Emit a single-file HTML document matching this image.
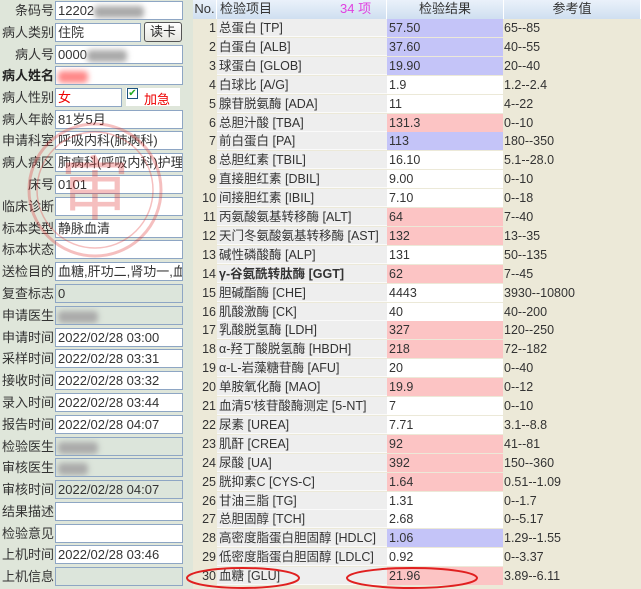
<!DOCTYPE html>
<html><head><meta charset="utf-8"><style>
*{margin:0;padding:0;box-sizing:border-box}
body{width:641px;height:589px;overflow:hidden;background:#dfe6da;font-family:"Liberation Sans","Noto Sans CJK SC",sans-serif;position:relative;font-size:13px;color:#222}
.l{position:absolute;left:0;width:54px;height:19px;line-height:19px;text-align:right;font-size:13px;color:#333;white-space:nowrap}
.i{position:absolute;left:55px;width:128px;height:19px;border:1px solid #8ea6c4;background:#fff;font-size:13px;line-height:17px;padding-left:2px;white-space:nowrap;overflow:hidden;color:#333}
.g{background:#dce5db}
.blur{display:inline-block;height:12px;background:#aaa;filter:blur(3px);vertical-align:middle;border-radius:4px}
#tbl{position:absolute;left:193px;top:0;width:448px;height:589px;background:#ece9d8}
.hd{position:absolute;top:0;height:19px;background:linear-gradient(#eaf1fa,#cfdff0);border-right:1px solid #fff;font-size:13px;line-height:18px;color:#333}
.r{position:absolute;left:0;width:448px;height:19px;font-size:12.5px;line-height:18px;white-space:nowrap}
.r span{position:absolute;top:0;height:18px}
.n{left:0;width:23px;text-align:right;color:#333}
.t{left:24px;width:170px;background:#eeeeee;padding-left:2px;color:#333;border-bottom:1px solid #fafafa}
.v{left:194px;width:116px;background:#fff;padding-left:2px;color:#333}
.f{left:311px;padding-left:0;color:#333}
.lo{background:#c4c4f8!important}.hi{background:#fcc4c4!important}
</style></head><body>

<div class="l" style="top:1px">条码号</div><div class="i" style="top:1px">12202<span class="blur" style="width:50px"></span></div>
<div class="l" style="top:23px">病人类别</div><div class="i" style="top:23px;width:86px">住院</div>
<div style="position:absolute;left:144px;top:22px;width:38px;height:20px;border:1px solid #555;border-radius:3px;background:linear-gradient(#fff,#e6e6e0);font-size:13px;text-align:center;line-height:18px">读卡</div>
<div class="l" style="top:45px">病人号</div><div class="i" style="top:45px">0000<span class="blur" style="width:40px"></span></div>
<div class="l" style="top:66px;font-weight:bold;color:#222">病人姓名</div><div class="i" style="top:66px"><span class="blur" style="width:30px;background:#f88"></span></div>
<div class="l" style="top:88px">病人性别</div><div class="i" style="top:88px;width:67px;color:#e00">女</div>
<div style="position:absolute;left:126px;top:88px;width:54px;height:18px;background:#fff"></div>
<div style="position:absolute;left:127px;top:88px;width:11px;height:11px;border:1px solid #1c5180;background:#fff;color:#2a2;font-size:10px;line-height:9px;text-align:center">✔</div>
<div style="position:absolute;left:144px;top:89px;color:#e00;font-size:13px">加急</div>
<div class="l" style="top:110px">病人年龄</div><div class="i" style="top:110px">81岁5月</div>
<div class="l" style="top:131px">申请科室</div><div class="i" style="top:131px">呼吸内科(肺病科)</div>
<div class="l" style="top:153px">病人病区</div><div class="i" style="top:153px">肺病科(呼吸内科)护理站</div>
<div class="l" style="top:175px">床号</div><div class="i" style="top:175px">0101</div>
<div class="l" style="top:197px">临床诊断</div><div class="i" style="top:197px"></div>
<div class="l" style="top:219px">标本类型</div><div class="i" style="top:219px">静脉血清</div>
<div class="l" style="top:240px">标本状态</div><div class="i" style="top:240px"></div>
<div class="l" style="top:262px">送检目的</div><div class="i" style="top:262px">血糖,肝功二,肾功一,血脂</div>
<div class="l" style="top:284px">复查标志</div><div class="i g" style="top:284px">0</div>
<div class="l" style="top:306px">申请医生</div><div class="i g" style="top:306px"><span class="blur" style="width:40px"></span></div>
<div class="l" style="top:328px">申请时间</div><div class="i" style="top:328px">2022/02/28 03:00</div>
<div class="l" style="top:349px">采样时间</div><div class="i" style="top:349px">2022/02/28 03:31</div>
<div class="l" style="top:371px">接收时间</div><div class="i" style="top:371px">2022/02/28 03:32</div>
<div class="l" style="top:393px">录入时间</div><div class="i" style="top:393px">2022/02/28 03:44</div>
<div class="l" style="top:415px">报告时间</div><div class="i" style="top:415px">2022/02/28 04:07</div>
<div class="l" style="top:437px">检验医生</div><div class="i g" style="top:437px"><span class="blur" style="width:40px"></span></div>
<div class="l" style="top:458px">审核医生</div><div class="i g" style="top:458px"><span class="blur" style="width:30px"></span></div>
<div class="l" style="top:480px">审核时间</div><div class="i g" style="top:480px">2022/02/28 04:07</div>
<div class="l" style="top:502px">结果描述</div><div class="i" style="top:502px"></div>
<div class="l" style="top:524px">检验意见</div><div class="i" style="top:524px"></div>
<div class="l" style="top:545px">上机时间</div><div class="i" style="top:545px">2022/02/28 03:46</div>
<div class="l" style="top:567px">上机信息</div><div class="i g" style="top:567px"></div>

<svg style="position:absolute;left:0;top:0;pointer-events:none" width="190" height="300"><g opacity="0.3" fill="none" stroke="#e03030"><circle cx="95" cy="190" r="66" stroke-width="3"/><circle cx="95" cy="190" r="58" stroke-width="1.5"/></g><text x="95" y="214" text-anchor="middle" font-size="70" fill="#e03030" opacity="0.3" font-family="Noto Sans CJK SC">审</text></svg>

<div id="tbl">
<div class="hd" style="left:0;width:24px;text-align:center">No.</div>
<div class="hd" style="left:24px;width:170px;padding-left:3px">检验项目<span style="position:absolute;left:123px;color:#e040e0">34 项</span></div>
<div class="hd" style="left:194px;width:117px;text-align:center">检验结果</div>
<div class="hd" style="left:311px;width:137px;text-align:center">参考值</div>
</div>
<div style="position:absolute;left:193px;top:19px;width:448px">
<div class="r" style="top:0"><span class="n">1</span><span class="t">总蛋白 [TP]</span><span class="v lo">57.50</span><span class="f">65--85</span></div>
<div class="r" style="top:18.9px"><span class="n">2</span><span class="t">白蛋白 [ALB]</span><span class="v lo">37.60</span><span class="f">40--55</span></div>
<div class="r" style="top:37.8px"><span class="n">3</span><span class="t">球蛋白 [GLOB]</span><span class="v lo">19.90</span><span class="f">20--40</span></div>
<div class="r" style="top:56.7px"><span class="n">4</span><span class="t">白球比 [A/G]</span><span class="v">1.9</span><span class="f">1.2--2.4</span></div>
<div class="r" style="top:75.6px"><span class="n">5</span><span class="t">腺苷脱氨酶 [ADA]</span><span class="v">11</span><span class="f">4--22</span></div>
<div class="r" style="top:94.5px"><span class="n">6</span><span class="t">总胆汁酸 [TBA]</span><span class="v hi">131.3</span><span class="f">0--10</span></div>
<div class="r" style="top:113.4px"><span class="n">7</span><span class="t">前白蛋白 [PA]</span><span class="v lo">113</span><span class="f">180--350</span></div>
<div class="r" style="top:132.3px"><span class="n">8</span><span class="t">总胆红素 [TBIL]</span><span class="v">16.10</span><span class="f">5.1--28.0</span></div>
<div class="r" style="top:151.2px"><span class="n">9</span><span class="t">直接胆红素 [DBIL]</span><span class="v">9.00</span><span class="f">0--10</span></div>
<div class="r" style="top:170.1px"><span class="n">10</span><span class="t">间接胆红素 [IBIL]</span><span class="v">7.10</span><span class="f">0--18</span></div>
<div class="r" style="top:189px"><span class="n">11</span><span class="t">丙氨酸氨基转移酶 [ALT]</span><span class="v hi">64</span><span class="f">7--40</span></div>
<div class="r" style="top:207.9px"><span class="n">12</span><span class="t">天门冬氨酸氨基转移酶 [AST]</span><span class="v hi">132</span><span class="f">13--35</span></div>
<div class="r" style="top:226.8px"><span class="n">13</span><span class="t">碱性磷酸酶 [ALP]</span><span class="v">131</span><span class="f">50--135</span></div>
<div class="r" style="top:245.7px"><span class="n">14</span><span class="t" style="font-weight:bold">γ-谷氨酰转肽酶 [GGT]</span><span class="v hi">62</span><span class="f">7--45</span></div>
<div class="r" style="top:264.6px"><span class="n">15</span><span class="t">胆碱酯酶 [CHE]</span><span class="v">4443</span><span class="f">3930--10800</span></div>
<div class="r" style="top:283.5px"><span class="n">16</span><span class="t">肌酸激酶 [CK]</span><span class="v">40</span><span class="f">40--200</span></div>
<div class="r" style="top:302.4px"><span class="n">17</span><span class="t">乳酸脱氢酶 [LDH]</span><span class="v hi">327</span><span class="f">120--250</span></div>
<div class="r" style="top:321.3px"><span class="n">18</span><span class="t">α-羟丁酸脱氢酶 [HBDH]</span><span class="v hi">218</span><span class="f">72--182</span></div>
<div class="r" style="top:340.2px"><span class="n">19</span><span class="t">α-L-岩藻糖苷酶 [AFU]</span><span class="v">20</span><span class="f">0--40</span></div>
<div class="r" style="top:359.1px"><span class="n">20</span><span class="t">单胺氧化酶 [MAO]</span><span class="v hi">19.9</span><span class="f">0--12</span></div>
<div class="r" style="top:378px"><span class="n">21</span><span class="t">血清5'核苷酸酶测定 [5-NT]</span><span class="v">7</span><span class="f">0--10</span></div>
<div class="r" style="top:396.9px"><span class="n">22</span><span class="t">尿素 [UREA]</span><span class="v">7.71</span><span class="f">3.1--8.8</span></div>
<div class="r" style="top:415.8px"><span class="n">23</span><span class="t">肌酐 [CREA]</span><span class="v hi">92</span><span class="f">41--81</span></div>
<div class="r" style="top:434.7px"><span class="n">24</span><span class="t">尿酸 [UA]</span><span class="v hi">392</span><span class="f">150--360</span></div>
<div class="r" style="top:453.6px"><span class="n">25</span><span class="t">胱抑素C [CYS-C]</span><span class="v hi">1.64</span><span class="f">0.51--1.09</span></div>
<div class="r" style="top:472.5px"><span class="n">26</span><span class="t">甘油三脂 [TG]</span><span class="v">1.31</span><span class="f">0--1.7</span></div>
<div class="r" style="top:491.4px"><span class="n">27</span><span class="t">总胆固醇 [TCH]</span><span class="v">2.68</span><span class="f">0--5.17</span></div>
<div class="r" style="top:510.3px"><span class="n">28</span><span class="t">高密度脂蛋白胆固醇 [HDLC]</span><span class="v lo">1.06</span><span class="f">1.29--1.55</span></div>
<div class="r" style="top:529.2px"><span class="n">29</span><span class="t">低密度脂蛋白胆固醇 [LDLC]</span><span class="v">0.92</span><span class="f">0--3.37</span></div>
<div class="r" style="top:548.1px"><span class="n">30</span><span class="t">血糖 [GLU]</span><span class="v hi">21.96</span><span class="f">3.89--6.11</span></div>
</div>
<svg style="position:absolute;left:0;top:0;pointer-events:none" width="641" height="589"><g fill="none" stroke="#e02020" stroke-width="2"><ellipse cx="243" cy="578" rx="56" ry="10"/><ellipse cx="412" cy="578" rx="65" ry="10"/></g></svg>
</body></html>
